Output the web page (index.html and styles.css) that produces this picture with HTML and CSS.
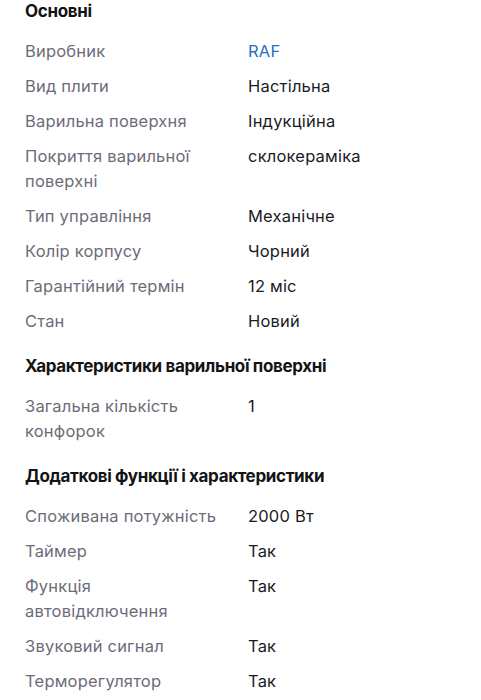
FILE: index.html
```html
<!DOCTYPE html>
<html lang="uk">
<head>
<meta charset="utf-8">
<link rel="stylesheet" href="styles.css">
</head>
<body>
<div class="specs">
  <section class="group first">
    <h2 class="title">Основні</h2>
    <dl class="rows">
      <dt>Виробник</dt><dd><a class="link" href="#">RAF</a></dd>
      <dt>Вид плити</dt><dd>Настільна</dd>
      <dt>Варильна поверхня</dt><dd>Індукційна</dd>
      <dt>Покриття варильної поверхні</dt><dd>склокераміка</dd>
      <dt>Тип управління</dt><dd>Механічне</dd>
      <dt>Колір корпусу</dt><dd>Чорний</dd>
      <dt>Гарантійний термін</dt><dd>12 міс</dd>
      <dt>Стан</dt><dd>Новий</dd>
    </dl>
  </section>
  <section class="group">
    <h2 class="title">Характеристики варильної поверхні</h2>
    <dl class="rows">
      <dt>Загальна кількість конфорок</dt><dd>1</dd>
    </dl>
  </section>
  <section class="group">
    <h2 class="title">Додаткові функції і характеристики</h2>
    <dl class="rows">
      <dt>Споживана потужність</dt><dd>2000 Вт</dd>
      <dt>Таймер</dt><dd>Так</dd>
      <dt>Функція автовідключення</dt><dd>Так</dd>
      <dt>Звуковий сигнал</dt><dd>Так</dd>
      <dt>Терморегулятор</dt><dd>Так</dd>
    </dl>
  </section>
</div>
</body>
</html>
```

FILE: styles.css
```css
html, body {
  margin: 0;
  padding: 0;
  background: #ffffff;
}
body {
  font-family: Inter, "Noto Sans", sans-serif;
  color: #1b1b1f;
}
.specs {
  padding: 0 20px 0 25px;
  margin-top: -1px;
}
.group {
  margin-top: 20px;
}
.group.first {
  margin-top: 0;
}
.title {
  margin: 0;
  font-size: 17px;
  font-weight: 700;
  line-height: 25px;
  letter-spacing: -0.35px;
  color: #141414;
}
.rows {
  display: grid;
  grid-template-columns: 223px 1fr;
  row-gap: 10px;
  margin: 15px 0 0;
}
.rows dt,
.rows dd {
  margin: 0;
  font-size: 16.5px;
  line-height: 25px;
  letter-spacing: 0.2px;
}
.rows dt {
  color: #6c6c78;
  padding-right: 24px;
}
.rows dd {
  color: #1b1b1f;
}
.link {
  color: #2b6cc4;
  text-decoration: none;
}
```
